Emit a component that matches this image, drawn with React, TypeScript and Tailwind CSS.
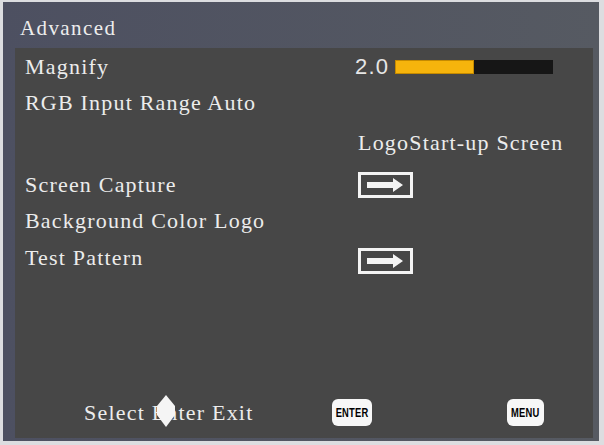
import React from 'react';

const serif = { fontFamily: '"Liberation Serif", "Times New Roman", serif' };

type Row = {
  label: string;
  height: string;
  right?: React.ReactNode;
};

function ArrowBox({ className = '' }: { className?: string }) {
  return (
    <svg width="55" height="26" viewBox="0 0 55 26" className={className}>
      <rect x="1.5" y="1.5" width="52" height="23" fill="none" stroke="#f4f4f4" strokeWidth="3" />
      <path d="M9 10 H35 V6 L45 13 L35 20 V16 H9 Z" fill="#f4f4f4" />
    </svg>
  );
}

function MagnifyBar({ value }: { value: number }) {
  return (
    <div className="flex items-center">
      <span
        className="w-[40px] text-[22px] text-[#e6e6e6] leading-none"
        style={{ fontFamily: '"Liberation Sans", Arial, sans-serif' }}
      >
        2.0
      </span>
      <div className="w-[158px] h-[14px] bg-[#161616] flex">
        <div className="h-full bg-[#f6b40c] border border-[#c58a00]" style={{ width: `${value}%` }} />
      </div>
    </div>
  );
}

function KeyBadge({ label }: { label: string }) {
  return (
    <div className="h-[27px] rounded-[6px] bg-[#f7f7f7] flex items-center justify-center overflow-hidden">
      <span
        className="text-[12px] font-black text-black tracking-[0.3px] scale-x-[0.78]"
        style={{ fontFamily: '"Liberation Sans Narrow", "Liberation Sans", Arial, sans-serif' }}
      >
        {label}
      </span>
    </div>
  );
}

export default function App() {
  const rows: Row[] = [
    { label: 'Magnify', height: 'h-[36px]', right: <MagnifyBar value={50} /> },
    { label: 'RGB Input Range Auto', height: 'h-[40px]' },
    { label: '', height: 'h-[42px]', right: <span className="pl-[3px]">LogoStart-up Screen</span> },
    { label: 'Screen Capture', height: 'h-[36px]', right: <ArrowBox className="ml-[3px]" /> },
    { label: 'Background Color Logo', height: 'h-[37px]' },
    { label: 'Test Pattern', height: 'h-[37px]', right: <ArrowBox className="ml-[3px] mt-[6px]" /> },
  ];

  return (
    <div className="w-[604px] h-[445px] bg-[#dcdde0] pt-[2px] pl-[3px] pr-[5px] pb-[4px]">
      <div className="w-full h-full bg-gradient-to-r from-[#4d5061] to-[#565a62] flex flex-col" style={serif}>
        <div className="h-[46px] pl-[17px] pt-[8px] flex items-start">
          <span className="text-[21px] leading-[37px] tracking-[1.4px] text-[#ededed]">Advanced</span>
        </div>

        <div className="flex-1 ml-[12px] mr-[6px] mb-[3px] bg-[#474747] flex flex-col text-[22px] text-[#ececec] tracking-[1.2px]">
          {rows.map((row, i) => (
            <div key={i} className={`${row.height} flex items-start`}>
              <div className="h-[37px] w-[340px] pl-[10px] leading-[37px]">{row.label}</div>
              <div className="h-[37px] flex items-center leading-[37px]">{row.right}</div>
            </div>
          ))}

          <div className="mt-auto mb-[7px] h-[37px] flex items-center">
            <div className="relative w-[248px] pl-[69px] leading-[37px]">
              Select Enter Exit
              <svg
                width="18"
                height="32"
                viewBox="0 0 18 32"
                className="absolute left-[142px] top-[1px]"
              >
                <polygon points="9,0 18,11 18,20 9,32 0,20 0,11" fill="#f5f5f5" />
              </svg>
            </div>
            <div className="w-[40px] ml-[69px]">
              <KeyBadge label="ENTER" />
            </div>
            <div className="w-[37px] ml-[135px]">
              <KeyBadge label="MENU" />
            </div>
          </div>
        </div>
      </div>
    </div>
  );
}
